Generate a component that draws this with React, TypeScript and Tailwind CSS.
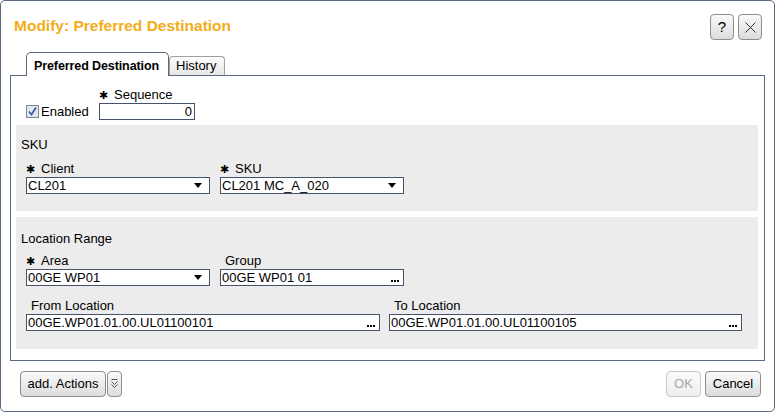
import React from "react";

const Req = () => <span className="mr-[6px] text-[11px]">✱</span>;

const Select = ({ value, w }: { value: string; w: string }) => (
  <div
    className={`${w} h-[17px] border border-[#44536a] bg-white flex items-center justify-between pl-[1px] pr-[7px]`}
  >
    <span className="text-[13px] leading-[15px] text-black">{value}</span>
    <svg width="8" height="5" viewBox="0 0 8 5">
      <path d="M0 0 L8 0 L4 5 Z" fill="#000" />
    </svg>
  </div>
);

const Lookup = ({ value, w }: { value: string; w: string }) => (
  <div
    className={`${w} h-[17px] border border-[#44536a] bg-white flex items-center justify-between pl-[1px] pr-[4px]`}
  >
    <span className="text-[13px] leading-[15px] text-black">{value}</span>
    <svg width="8" height="8" viewBox="0 0 8 8" className="self-end mb-[3px]">
      <rect x="0" y="6" width="2" height="2" fill="#000" />
      <rect x="3" y="6" width="2" height="2" fill="#000" />
      <rect x="6" y="6" width="2" height="2" fill="#000" />
    </svg>
  </div>
);

const Field = ({
  label,
  required,
  children,
}: {
  label: string;
  required?: boolean;
  children: React.ReactNode;
}) => (
  <div className="flex flex-col">
    <div className={`h-[16px] text-[13px] leading-[16px] text-black ${required ? "" : "pl-[5px]"}`}>
      {required && <Req />}
      {label}
    </div>
    {children}
  </div>
);

const Btn = ({
  children,
  className = "",
  disabled,
}: {
  children: React.ReactNode;
  className?: string;
  disabled?: boolean;
}) => (
  <div
    className={`h-[26px] flex items-center justify-center rounded-[4px] border text-[13px] ${
      disabled
        ? "border-[#c8c8c8] text-[#a8a8a8] bg-gradient-to-b from-[#fbfbfb] to-[#eeeeee]"
        : "border-[#8e8e8e] text-black bg-gradient-to-b from-[#fafafa] to-[#dcdcdc]"
    } ${className}`}
  >
    {children}
  </div>
);

export default function App() {
  return (
    <div className="w-[775px] h-[412px] bg-white border border-[#5b6a80] rounded-[5px] flex flex-col font-['Liberation_Sans',Arial,sans-serif] text-black overflow-hidden">
      <div className="h-[51px] flex items-start justify-between pl-[13px] pr-[12px] pt-[13px]">
        <div className="text-[15.5px] leading-[24px] font-bold text-[#f2ad18]">
          Modify: Preferred Destination
        </div>
        <div className="flex gap-[4px]">
          <Btn className="w-[24px] h-[24px] text-[15px]">?</Btn>
          <Btn className="w-[24px] h-[24px]">
            <svg width="11" height="11" viewBox="0 0 11 11">
              <path d="M0.5 0.5 L10.5 10.5 M10.5 0.5 L0.5 10.5" stroke="#333" strokeWidth="1" />
            </svg>
          </Btn>
        </div>
      </div>

      <div className="px-[9px]">
        <div className="h-[23px] flex items-end pl-[16px]">
          <div className="relative z-10 h-[24px] -mb-px w-[143px] border border-b-0 border-[#5b6a80] rounded-t-[5px] bg-white pl-[7px] pt-[5px] text-[12.5px] leading-[16px] font-bold tracking-[-0.1px] whitespace-nowrap">
            Preferred Destination
          </div>
          <div className="h-[19px] w-[56px] border border-b-0 border-[#a0a0a0] rounded-t-[4px] bg-gradient-to-b from-[#fdfdfd] to-[#e6e6e6] pl-[6px] pt-[1px] text-[13px] leading-[16px]">
            History
          </div>
        </div>

        <div className="h-[286px] border border-[#5b6a80] pl-[5px] pr-[6px] pt-[11px]">
          <div className="flex items-end h-[33px] mb-[5px] pl-[10px]">
            <div className="flex items-center h-[17px] w-[73px]">
              <svg width="13" height="13" viewBox="0 0 13 13">
                <rect x="0.5" y="0.5" width="12" height="12" fill="#e4e8ee" stroke="#7d8797" />
                <path d="M3 6.5 L5.5 9.5 L10 2.5" stroke="#3a5fa8" strokeWidth="1.8" fill="none" />
              </svg>
              <span className="ml-[2px] text-[13px] leading-[16px]">Enabled</span>
            </div>
            <Field label="Sequence" required>
              <div className="w-[96px] h-[17px] border border-[#44536a] bg-white text-right pr-[2px] text-[13px] leading-[15px]">
                0
              </div>
            </Field>
          </div>

          <div className="h-[86px] bg-[#ececec] px-[5px] pt-[12px]">
            <div className="text-[13px] leading-[16px]">SKU</div>
            <div className="flex gap-[10px] pl-[5px] mt-[8px]">
              <Field label="Client" required>
                <Select value="CL201" w="w-[184px]" />
              </Field>
              <Field label="SKU" required>
                <Select value="CL201 MC_A_020" w="w-[184px]" />
              </Field>
            </div>
          </div>

          <div className="h-[132px] mt-[6px] bg-[#ececec] px-[5px] pt-[14px]">
            <div className="text-[13px] leading-[16px]">Location Range</div>
            <div className="flex gap-[10px] pl-[5px] mt-[6px]">
              <Field label="Area" required>
                <Select value="00GE WP01" w="w-[184px]" />
              </Field>
              <Field label="Group">
                <Lookup value="00GE WP01 01" w="w-[184px]" />
              </Field>
            </div>
            <div className="flex gap-[9px] pl-[5px] mt-[12px]">
              <Field label="From Location">
                <Lookup value="00GE.WP01.01.00.UL01100101" w="w-[354px]" />
              </Field>
              <Field label="To Location">
                <Lookup value="00GE.WP01.01.00.UL01100105" w="w-[353px]" />
              </Field>
            </div>
          </div>
        </div>
      </div>

      <div className="flex justify-between pl-[19px] pr-[13px] pt-[10px]">
        <div className="flex gap-px">
          <Btn className="w-[86px]">add. Actions</Btn>
          <Btn className="w-[15px]">
            <svg width="7" height="10" viewBox="0 0 7 10">
              <path d="M0.5 0.5 H6.5 M0.5 2.5 L3.5 5.5 L6.5 2.5 M0.5 5.5 L3.5 8.5 L6.5 5.5" stroke="#555" strokeWidth="1" fill="none" />
            </svg>
          </Btn>
        </div>
        <div className="flex gap-[4px]">
          <Btn className="w-[35px]" disabled>
            OK
          </Btn>
          <Btn className="w-[56px]">Cancel</Btn>
        </div>
      </div>
    </div>
  );
}
